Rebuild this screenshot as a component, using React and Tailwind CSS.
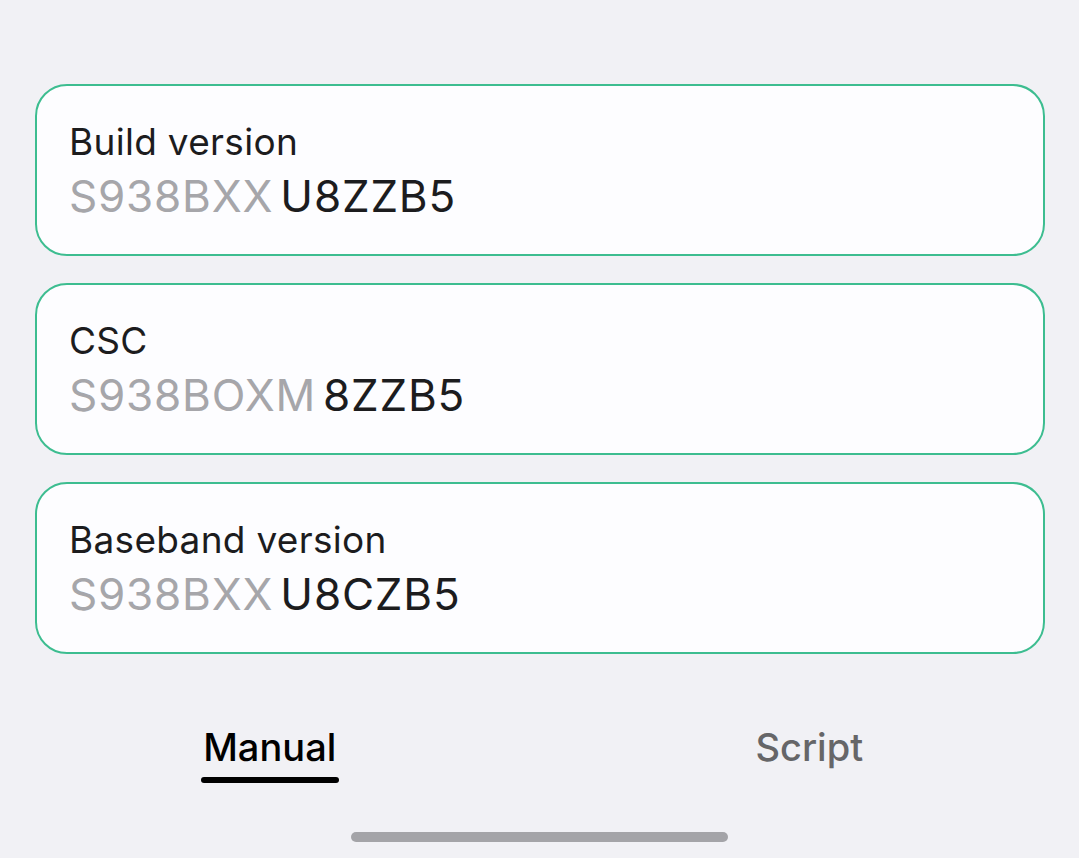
export default function App() {
  const rows = [
    { label: 'Build version', prefix: 'S938BXX', suffix: 'U8ZZB5' },
    { label: 'CSC', prefix: 'S938BOXM', suffix: '8ZZB5' },
    { label: 'Baseband version', prefix: 'S938BXX', suffix: 'U8CZB5' },
  ]

  return (
    <div
      className="w-[1079px] h-[858px] bg-[#f1f1f5] flex flex-col overflow-hidden"
      style={{ fontFamily: 'Inter, "Noto Sans", sans-serif' }}
    >
      <div className="pt-[84px] pl-[35px] pr-[34px] flex flex-col gap-[27px]">
        {rows.map((row) => (
          <div
            key={row.label}
            className="h-[172px] rounded-[32px] border-[2.5px] border-[#3dbd90] bg-[#fdfdff] pl-[32px] pt-[34px]"
          >
            <div className="text-[37px] leading-[44px] text-[#1c1c1e] tracking-[0.3px]">
              {row.label}
            </div>
            <div className="text-[44px] leading-[52px] tracking-[0.8px] mt-[6px]">
              <span className="text-[#a6a6aa]">{row.prefix}</span>
              <span className="text-[#1c1c1e] ml-[7px]">{row.suffix}</span>
            </div>
          </div>
        ))}
      </div>

      {/* Tabs */}
      <div className="mt-[70px] flex">
        <div className="w-1/2 flex justify-center">
          <div className="flex flex-col items-center">
            <span className="text-[38px] leading-[46px] text-black font-medium">Manual</span>
            <div className="mt-[7px] w-[138px] h-[6px] rounded-full bg-black" />
          </div>
        </div>
        <div className="w-1/2 flex justify-center">
          <span className="text-[38px] leading-[46px] text-[#666668] font-medium">Script</span>
        </div>
      </div>

      {/* Home indicator */}
      <div className="mt-[49px] flex justify-center">
        <div className="w-[377px] h-[10px] rounded-full bg-[#a4a4a8]" />
      </div>
    </div>
  )
}
